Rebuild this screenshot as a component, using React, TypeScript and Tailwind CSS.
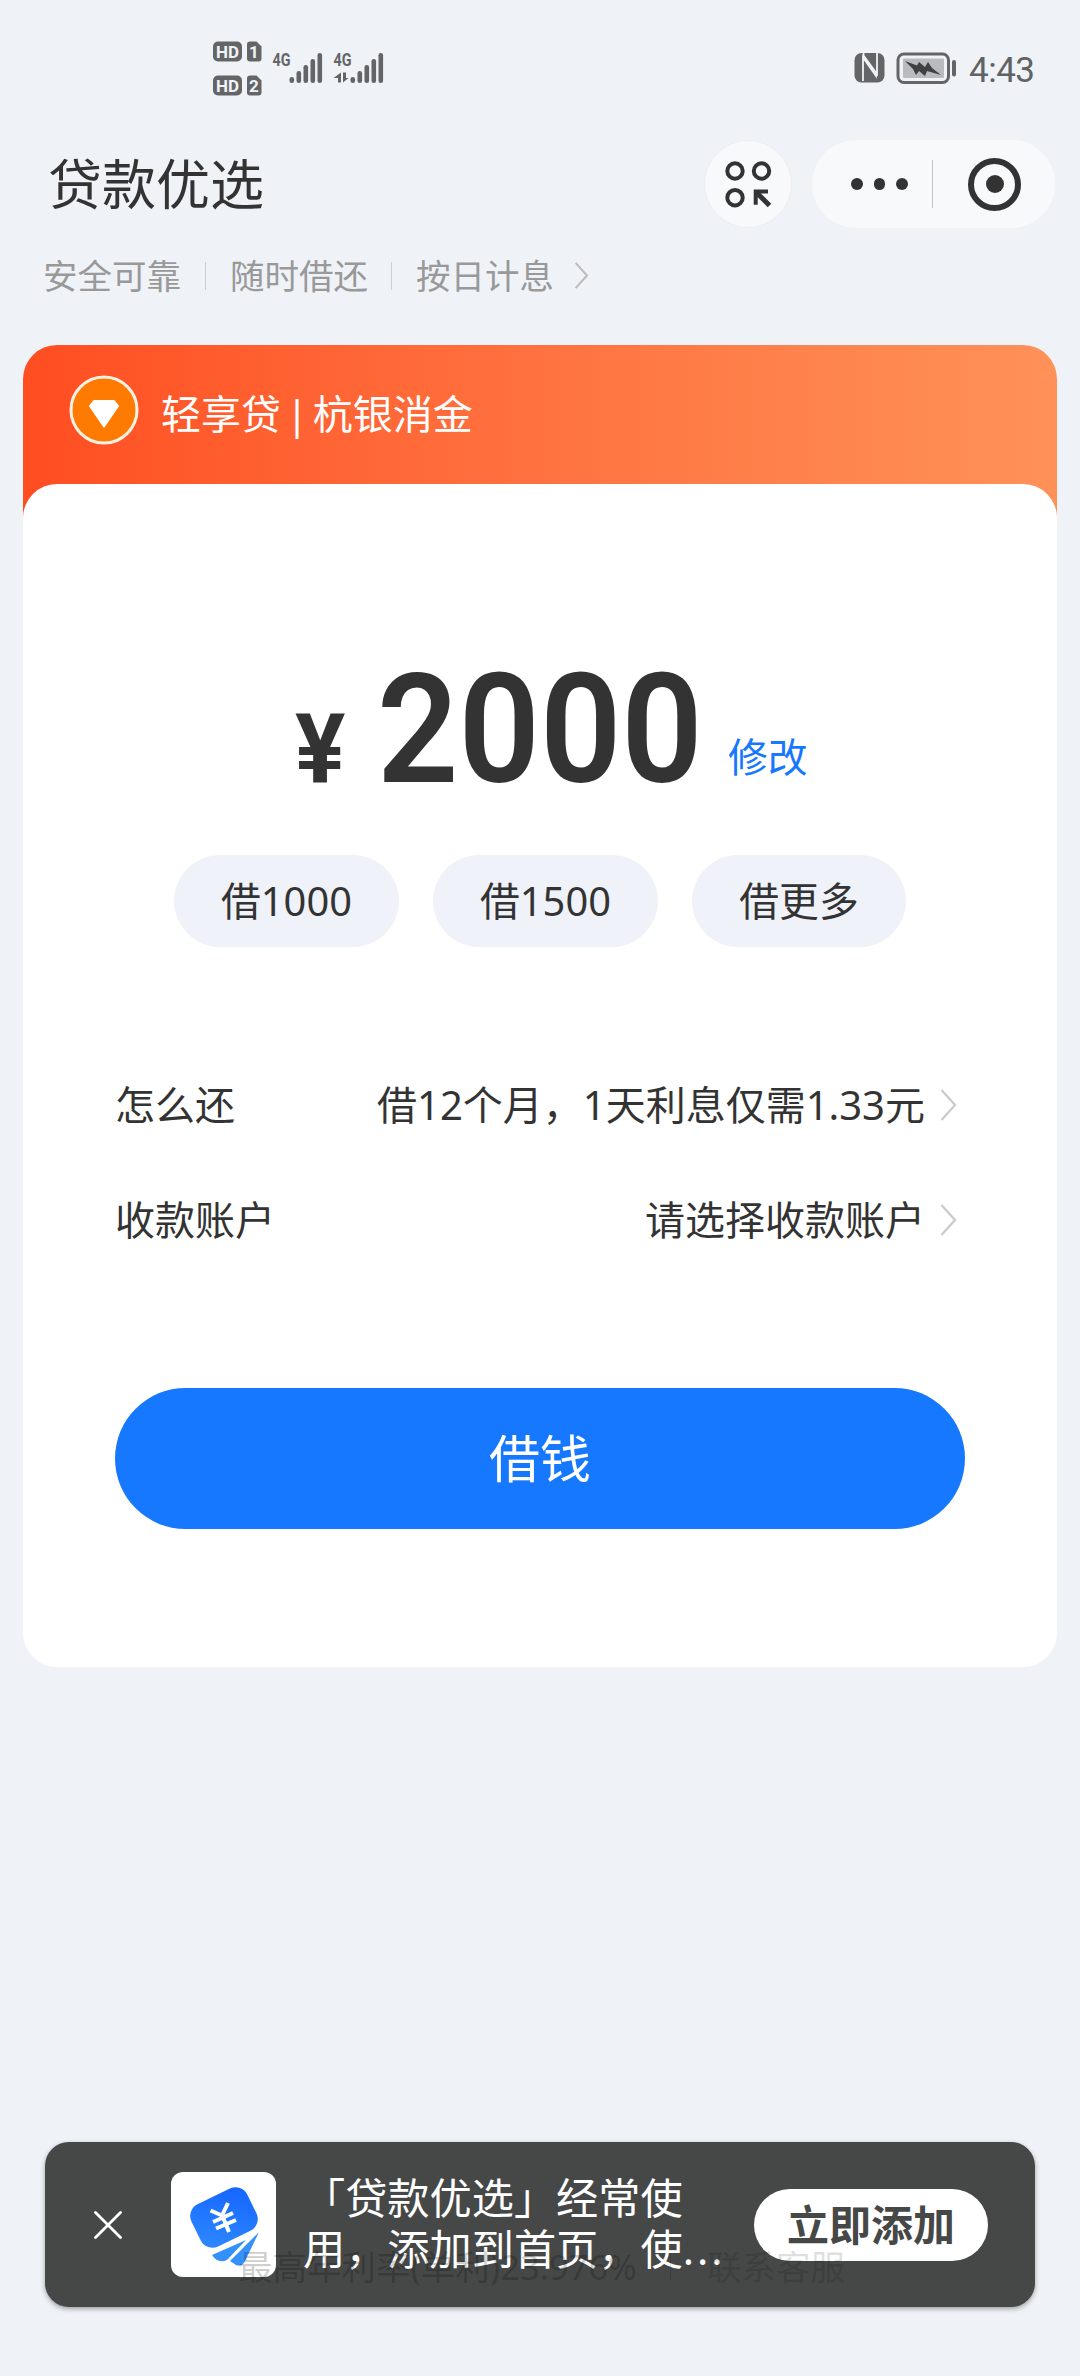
import React from "react";

const CJK = "font-['Noto_Sans','Noto_Sans_CJK_SC',sans-serif]";

function Signal({ x }: { x: number }) {
  return (
    <g fill="#646567">
      {[6, 12, 18, 24, 30].map((h, i) => (
        <rect key={h} x={x + i * 7} y={63 - h} width="4.6" height={h} rx="2.2" />
      ))}
    </g>
  );
}

function StatusBar() {
  return (
    <div className="flex h-[130px] shrink-0 justify-between">
      <svg className="ml-[190px]" width="220" height="130" viewBox="190 0 220 130">
        {[0, 34].map((dy, i) => (
          <g key={dy} transform={`translate(0 ${dy})`}>
            <rect x="213" y="41.5" width="29" height="20" rx="5" fill="#646567" />
            <text x="227.5" y="57.5" textAnchor="middle" fill="#f0f3f8" fontSize="17" fontWeight="700" fontFamily="Roboto" textLength="23" lengthAdjust="spacingAndGlyphs">HD</text>
            <path d="M250 41.5h6.500l5 5v12a3 3 0 0 1-3 3h-8.500a3 3 0 0 1-3-3v-14a3 3 0 0 1 3-3z" fill="#646567" />
            <text x="254" y="57.500" textAnchor="middle" fill="#f0f3f8" fontSize="17" fontWeight="700" fontFamily="Roboto">{i + 1}</text>
          </g>
        ))}
        <text x="272.500" y="66" fill="#646567" fontSize="18.500" fontWeight="700" fontFamily="Roboto" textLength="18" lengthAdjust="spacingAndGlyphs">4G</text>
        <text x="333.500" y="66" fill="#646567" fontSize="18.500" fontWeight="700" fontFamily="Roboto" textLength="18" lengthAdjust="spacingAndGlyphs">4G</text>
        <g transform="translate(0 20)">
          <Signal x={289.500} />
          <Signal x={350.500} />
        </g>
        <path d="M341 72.500V82.500H338V78H333.500ZM343 72.500V82.500L348.500 78H346V72.500Z" fill="#646567" />
      </svg>
      <div className="flex h-[130px] items-center pr-[46px]">
        <svg className="mt-[6px]" width="110" height="40" viewBox="850 48 110 40">
          <rect x="853.500" y="53" width="30" height="29.500" rx="7" fill="#646567" />
          <path d="M862 81V57.500L875 76V71M862 57L875 76M862.500 53V55.500L876 74V53" fill="none" stroke="#f0f3f8" strokeWidth="1.800" />
          <rect x="897" y="54" width="50.500" height="28.500" rx="6" fill="none" stroke="#646567" strokeWidth="3" />
          <rect x="902" y="58.500" width="41" height="19.500" rx="1" fill="#b9bbbe" />
          <path d="M904 61L916 65.500L918 62L924 67L927 62L931 68L940 75L926 71L924 76L918 71L915 75L912 69Z" fill="#404143" />
          <rect x="951" y="60" width="4" height="16.500" rx="2" fill="#646567" />
        </svg>
        <span className="mt-[11px] ml-2 w-[65px] font-['Roboto',sans-serif] text-[35px] leading-[40px] tracking-[-0.5px] text-[#616264]">4:43</span>
      </div>
    </div>
  );
}

function TitleBar() {
  return (
    <div className="flex h-[108px] shrink-0 items-center pr-[25px] pl-[48px]">
      <h1 className="flex-1 text-[54px] leading-[60px] text-[#333]">贷款优选</h1>
      <div className="flex size-[88px] items-center justify-center rounded-full border border-[#ebedf1] bg-[#f8f9fb]">
        <svg width="48" height="48" viewBox="0 0 48 48" fill="none" stroke="#333" strokeWidth="4">
          <circle cx="11" cy="11" r="7.700" />
          <circle cx="37.500" cy="11" r="7.700" />
          <circle cx="11" cy="37.700" r="7.700" />
          <path d="M31.700 44.700V31.500H44" />
          <path d="M32 32L45.500 45.500" strokeWidth="5" />
        </svg>
      </div>
      <div className="ml-[20px] flex h-[88px] w-[243px] items-center rounded-full bg-[#f8f9fb]">
        <div className="flex w-[120px] items-center gap-[11px] pl-[39px]">
          <i className="size-[11.500px] rounded-full bg-[#333]" />
          <i className="size-[11.500px] rounded-full bg-[#333]" />
          <i className="size-[11.500px] rounded-full bg-[#333]" />
        </div>
        <div className="h-[48px] w-px bg-[#c4c6c9]" />
        <div className="ml-[35px] flex size-[53px] items-center justify-center rounded-full border-[6px] border-[#333]">
          <i className="size-[18px] rounded-full bg-[#333]" />
        </div>
      </div>
    </div>
  );
}

function Chevron({ color, w, h }: { color: string; w: number; h: number }) {
  return (
    <svg className="block shrink-0" width={w} height={h} viewBox="0 0 16 32" fill="none" stroke={color} strokeWidth="2.400">
      <path d="M1 1L14.500 16L1 31" />
    </svg>
  );
}

function Benefits() {
  return (
    <div className="flex h-[75px] shrink-0 items-center pl-[43px] text-[34.500px] leading-[76px] text-[#999]">
      <span>安全可靠</span>
      <i className="mr-[24px] ml-[24px] h-[28px] w-px bg-[#ccc]" />
      <span>随时借还</span>
      <i className="mr-[24px] ml-[23px] h-[28px] w-px bg-[#ccc]" />
      <span className="mr-5">按日计息</span>
      <Chevron color="#bbb" w={15} h={27} />
    </div>
  );
}

function Row({ label, value }: { label: string; value: string }) {
  return (
    <div className="flex h-[115px] items-center pr-[8px] text-[40px] leading-[60px] text-[#333]">
      <span className="flex-1">{label}</span>
      <span className="mr-[15px]">{value}</span>
      <Chevron color="#ccc" w={17} h={32} />
    </div>
  );
}

function LoanCard() {
  return (
    <div className="mx-[23px] mt-[32px] rounded-[34px] bg-gradient-to-r from-[#ff4d20] to-[#ff9158] bg-[length:100%_200px] bg-no-repeat">
      <div className="flex h-[138.500px] items-center pl-[46px]">
        <svg className="-mt-[9px]" width="70" height="70" viewBox="0 0 70 70">
          <circle cx="35" cy="35" r="33" fill="#ff7a00" stroke="#fff1e4" strokeWidth="3" />
          <path d="M25 26H45L49 31L35 51.500L21 31Z" fill="#fff" stroke="#fff" strokeWidth="2" strokeLinejoin="round" />
        </svg>
        <span className="ml-[22px] text-[40px] leading-[60px] text-white [word-spacing:-5.500px]">轻享贷 | 杭银消金</span>
      </div>
      <div className="h-[1183px] rounded-[34px] bg-white px-[92px] pt-[171px]">
        <div className="flex h-[150px] items-baseline pl-[180px] text-[#333]">
          <span className="w-[82px] origin-left scale-x-[0.970] font-['Roboto',sans-serif] text-[97px] leading-[150px] font-bold">¥</span>
          <span className="w-[351px] origin-left scale-x-[0.938] font-['Roboto',sans-serif] text-[152px] leading-[150px] font-semibold">2000</span>
          <a className="-translate-y-[10px] text-[39.800px] leading-[60px] text-[#1677ff]">修改</a>
        </div>
        <div className="mt-[50px] flex gap-[34px] pl-[59px] text-[39.800px] leading-[92px] text-[#333]">
          <button className="h-[92px] w-[225px] rounded-full bg-[#eff2f8]">借1000</button>
          <button className="h-[92px] w-[225px] rounded-full bg-[#eff2f8]">借1500</button>
          <button className="h-[92px] w-[214px] rounded-full bg-[#eff2f8]">借更多</button>
        </div>
        <div className="mt-[101px]">
          <Row label="怎么还" value="借12个月，1天利息仅需1.33元" />
          <Row label="收款账户" value="请选择收款账户" />
        </div>
        <button className="mt-[110px] h-[141px] w-full rounded-full bg-[#1677ff] text-[51px] leading-[141px] text-white">借钱</button>
      </div>
    </div>
  );
}

function AppIcon() {
  return (
    <svg className="ml-[49px] shrink-0 rounded-[12px] bg-white" width="105" height="105" viewBox="0 0 105 105">
      <defs>
        <linearGradient id="card" x1="0" y1="1" x2="1" y2="0">
          <stop offset="0" stopColor="#2e8bff" />
          <stop offset="1" stopColor="#1463ff" />
        </linearGradient>
      </defs>
      <path d="M41 83L75 68L56 88Q47 92 41 83ZM59 89L88 60L74 89Q71 95 65 93Z" fill="#3490fb" />
      <rect x="22" y="22" width="62" height="47" rx="13" fill="url(#card)" transform="rotate(-26 53 45.500)" />
      <path d="M36 80Q66 72 89 58" fill="none" stroke="#fff" strokeWidth="3" />
      <path d="M39.500 38.500L51 43.500L57 31M42 50L62 41M45 56.500L65 48M51 43L58 60" fill="none" stroke="#fff" strokeWidth="4" />
    </svg>
  );
}

function AddPrompt() {
  return (
    <div className="relative mx-[45px] mt-auto mb-[69px] flex h-[165px] shrink-0 items-center rounded-[24px] bg-[#464847] pl-[49px] shadow-[0_2px_5px_rgba(0,0,0,0.35)]">
      <svg width="28" height="28" viewBox="0 0 28 28" stroke="#fff" strokeWidth="2.800" strokeLinecap="round">
        <path d="M1.500 1.500L26.500 26.500M26.500 1.500L1.500 26.500" />
      </svg>
      <AppIcon />
      <p className="-mt-[3px] ml-[27px] w-[439px] text-[42.200px] leading-[51px] whitespace-nowrap text-white">
        「贷款优选」经常使
        <br />
        用，添加到首页，使<span className="tracking-[3px]">...</span>
      </p>
      <button className="ml-[12px] h-[72px] w-[234px] rounded-full bg-white text-[42px] leading-[72px] font-bold text-[#464847]">立即添加</button>
      <div className="pointer-events-none absolute top-[99px] left-[193px] flex items-center text-[34.500px] leading-[52px] whitespace-nowrap text-black/20">
        <span className="w-[432px]">最高年利率(单利)23.976%</span>
        <i className="h-[28px] w-px bg-black/15" />
        <span className="ml-[36px] text-black/15">联系客服</span>
      </div>
    </div>
  );
}

export default function App() {
  return (
    <div className={`flex h-[2376px] w-[1080px] flex-col overflow-hidden bg-[#eff3f8] ${CJK}`}>
      <StatusBar />
      <TitleBar />
      <Benefits />
      <LoanCard />
      <AddPrompt />
    </div>
  );
}
